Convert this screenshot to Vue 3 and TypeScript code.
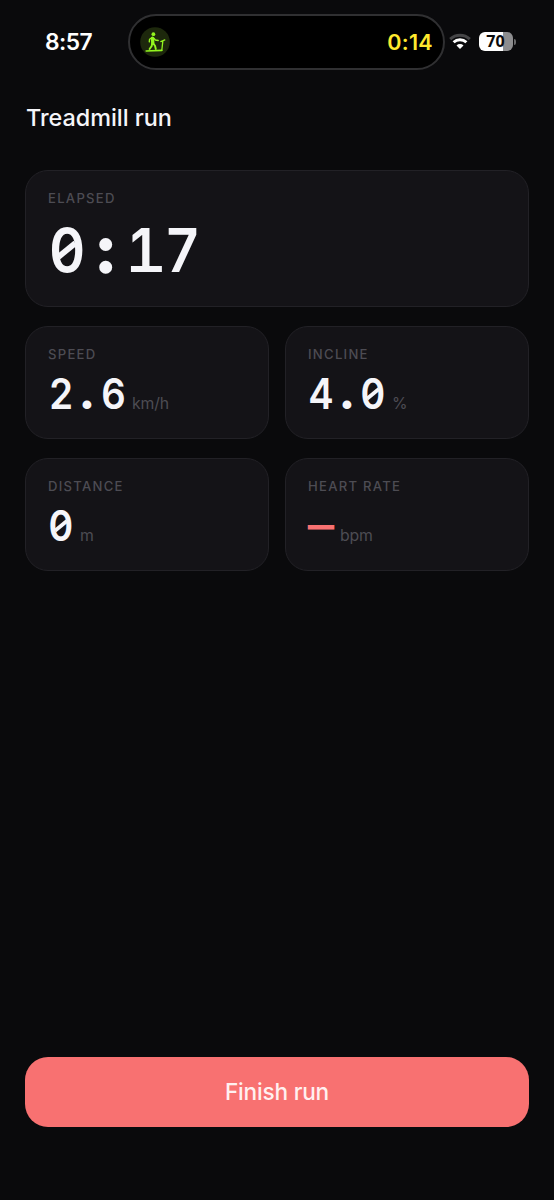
<script setup lang="ts">
interface Metric {
  label: string
  value: string
  unit?: string
  wide?: boolean
  alert?: boolean
}

const metrics: Metric[] = [
  { label: 'ELAPSED', value: '0:17', wide: true },
  { label: 'SPEED', value: '2.6', unit: 'km/h' },
  { label: 'INCLINE', value: '4.0', unit: '%' },
  { label: 'DISTANCE', value: '0', unit: 'm' },
  { label: 'HEART RATE', value: '—', unit: 'bpm', alert: true },
]

const glyphNames: Record<string, string> = {
  '0': 'zero',
  '1': 'one',
  '2': 'two',
  '4': 'four',
  '6': 'six',
  '7': 'seven',
  ':': 'colon',
  '.': 'dot',
  '—': 'dash',
}
</script>

<template>
  <div class="screen">
    <header class="status">
      <div class="clock">8:57</div>
      <div class="island">
        <svg class="activity" viewBox="0 0 30 30" width="30" height="30">
          <circle cx="15" cy="15" r="14.8" fill="#1d280c" />
          <g fill="none" stroke="#93f51f" stroke-linecap="round" stroke-linejoin="round">
            <circle cx="13.4" cy="7.2" r="1.9" fill="#93f51f" stroke="none" />
            <path d="M12.5 11.2 12.8 15.8" stroke-width="3.3" />
            <path d="M11.6 10.8 9.6 12.2 9.3 14.8" stroke-width="1.4" />
            <path d="M13.6 11 15.4 13 18.2 13.5" stroke-width="1.4" />
            <path d="M12.1 16.5 11.7 19 9.6 22M13.2 16.3 15 18.8 15.8 22" stroke-width="1.9" />
            <path d="M6.2 24 21.8 23.3" stroke-width="1.7" />
            <path d="M21.8 23.2 22.8 14.4M20.8 14.6 24.8 12.9" stroke-width="1.3" />
          </g>
        </svg>
        <span class="timer">0:14</span>
      </div>
      <svg class="wifi" viewBox="0 0 22 17" width="22" height="17">
        <path d="M1.2 6.1A14.3 14.3 0 0 1 20.8 6.1" fill="none" stroke="#454547" stroke-width="3" />
        <path d="M4.6 9.3A9.2 9.2 0 0 1 17.4 9.3" fill="none" stroke="#fff" stroke-width="2.9" />
        <path d="M7.5 12.5A5 5 0 0 1 14.5 12.5L11 16Z" fill="#fff" />
      </svg>
      <div class="battery"><span>70</span></div>
      <i class="battery-tip"></i>
    </header>

    <h1>Treadmill run</h1>

    <main class="metrics">
      <section v-for="m in metrics" :key="m.label" class="card" :class="{ wide: m.wide, alert: m.alert }">
        <div class="label">{{ m.label }}</div>
        <div class="reading">
          <span class="value"
            ><span v-for="(c, i) in m.value" :key="i" class="cell" :class="glyphNames[c]"><b>{{ c }}</b></span></span
          >
          <span v-if="m.unit" class="unit">{{ m.unit }}</span>
        </div>
      </section>
    </main>

    <button class="finish" type="button">Finish run</button>
  </div>
</template>

<style>
body {
  background: #0a0a0c;
}
</style>

<style scoped>
.screen {
  box-sizing: border-box;
  width: 554px;
  height: 1200px;
  padding: 14px 25px 73px;
  display: flex;
  flex-direction: column;
  background: #0a0a0c;
  color: #f5f5f9;
  font-family: Inter, 'Liberation Sans', sans-serif;
}
.status {
  display: flex;
  align-items: center;
  height: 55px;
  flex: none;
}
.clock {
  box-sizing: border-box;
  width: 103px;
  padding-left: 20px;
  font-size: 22.8px;
  font-weight: 600;
  letter-spacing: -0.6px;
  color: #fff;
}
.island {
  box-sizing: border-box;
  width: 317px;
  height: 56px;
  border: 2px solid #303032;
  border-radius: 28px;
  background: #000;
  display: flex;
  align-items: center;
  justify-content: space-between;
  padding: 0 10px;
}
.timer {
  font-size: 21.5px;
  font-weight: 600;
  letter-spacing: 0.3px;
  color: #ffe92e;
}
.wifi {
  margin-left: 4px;
}
.battery {
  width: 34px;
  height: 19px;
  margin-left: 8px;
  border-radius: 6px;
  background: linear-gradient(90deg, #fff 70%, #8d8d8f 70%);
  color: #0a0a0c;
  font-family: 'Open Sans', Inter, sans-serif;
  font-size: 16px;
  font-weight: 700;
  line-height: 19px;
  text-align: center;
}
.battery span {
  margin-right: 1px;
}
.battery-tip {
  width: 2px;
  height: 6px;
  margin-left: 1px;
  border-radius: 0 2px 2px 0;
  background: #69696b;
}
h1 {
  margin: 33px 0 0 1px;
  font-size: 23.4px;
  line-height: 32px;
  font-weight: 500;
  letter-spacing: -0.02px;
}
.metrics {
  margin-top: 36px;
  display: grid;
  grid-template-columns: 1fr 1fr;
  grid-template-rows: 137px 113px 113px;
  gap: 19px 16px;
}
.card {
  box-sizing: border-box;
  border: 1.4px solid #222126;
  border-radius: 23px;
  background: #141317;
  padding: 17px 22px 0;
}
.wide {
  grid-column: 1 / -1;
}
.label {
  font-size: 13.1px;
  line-height: 20px;
  font-weight: 500;
  letter-spacing: 1.27px;
  color: #4d4c53;
}
.reading {
  display: flex;
  align-items: baseline;
  font-size: 42px;
  line-height: 50px;
  margin-top: 5px;
}
.wide .reading {
  font-size: 61px;
  line-height: 74px;
}
.value {
  display: flex;
}
.cell {
  width: 0.62em;
  display: flex;
  justify-content: center;
}
.wide .cell {
  width: 0.63em;
}
.cell b {
  position: relative;
  font-weight: 600;
  transform: scaleX(0.91);
}
.zero b {
  transform: scaleX(0.89);
}
.zero b::after {
  content: '';
  position: absolute;
  left: 50%;
  top: 50%;
  width: 0.38em;
  height: 0.1em;
  background: currentColor;
  transform: translate(-50%, -50%) rotate(-36deg);
}
.one b {
  transform: translateX(-0.035em) scaleX(0.91);
}
.one b::after {
  content: '';
  position: absolute;
  left: 0.01em;
  bottom: 0.245em;
  width: 0.57em;
  height: 0.105em;
  background: currentColor;
}
.colon b {
  -webkit-text-stroke: 0.055em currentColor;
  transform: translateY(-0.015em);
}
.dot b {
  -webkit-text-stroke: 0.05em currentColor;
  transform: translateY(-0.02em);
}
.alert .value {
  color: #f87171;
}
.dash b {
  transform: translateY(-0.03em) scaleX(0.63);
}
.unit {
  margin-left: 6px;
  font-size: 15.8px;
  letter-spacing: -0.2px;
  color: #4d4c53;
}
.finish {
  margin-top: auto;
  height: 70px;
  flex: none;
  border: 0;
  border-radius: 23px;
  padding: 0 0 2px;
  background: #f87171;
  color: #fff0f0;
  font: 500 22.6px Inter, 'Liberation Sans', sans-serif;
  letter-spacing: -0.2px;
}
</style>
